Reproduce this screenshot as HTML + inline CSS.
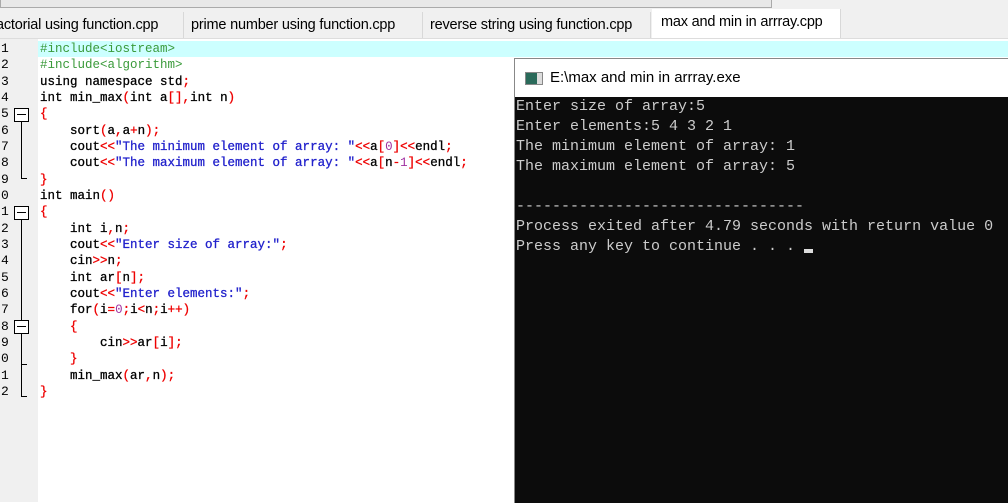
<!DOCTYPE html>
<html><head><style>
body{margin:0;width:1008px;height:502px;overflow:hidden;background:#fff;position:relative;font-family:"Liberation Sans",sans-serif}
.top{position:absolute;left:0;top:0;width:1008px;height:10px;background:#f0f0f0}
.top .b{position:absolute;left:0;top:0;width:770px;height:7px;border:1px solid #aaa;border-top:none;background:#e8e8e8}
.tabbar{position:absolute;left:0;top:10px;width:1008px;height:28px;background:#f0f0f0;border-bottom:1px solid #ddd}
.tab{position:absolute;top:2px;height:26px;background:#f0f0f0;border-right:1px solid #d8d8d8;font-size:14.5px;line-height:26px;color:#000;white-space:nowrap;overflow:hidden;letter-spacing:-0.2px}
.tab.act{background:#fff;top:-1px;height:29px;line-height:26px}
.gut{position:absolute;left:0;top:39px;width:38px;height:463px;background:#f0f0f0}
.hl{position:absolute;left:38px;top:41px;width:970px;height:16px;background:#ccffff}
.code{position:absolute;left:0;top:41px;font-family:"Liberation Mono",monospace;font-size:12.5px;line-height:16.33px;color:#000;white-space:pre;-webkit-text-stroke:0.3px #000}
.ln{position:absolute;left:1px;top:41px;font-family:"Liberation Mono",monospace;font-size:13px;line-height:16.33px;white-space:pre;color:#000}
.g{color:#3a9a3a;-webkit-text-stroke:0}.r{color:#e00;-webkit-text-stroke:0.3px #e00}.s{color:#22c;-webkit-text-stroke:0.3px #22c}.n{color:#a030a0;-webkit-text-stroke:0}
.fold{position:absolute;width:13px;height:12px;border:1px solid #000;background:#fff;left:14px}
.fold:after{content:"";position:absolute;left:2px;top:5px;width:9px;height:1px;background:#000}
.vl{position:absolute;left:21px;width:1px;background:#000}
.hz{position:absolute;left:21px;width:6px;height:1px;background:#000}
.con{position:absolute;left:514px;top:58px;width:494px;height:444px;border-left:1px solid #888;border-top:1px solid #888;background:#fff}
.title{position:absolute;left:0;top:0;width:494px;height:38px;font-size:15px;line-height:38px}
.ico{position:absolute;left:10px;top:13px;width:16px;height:11px;border:1px solid #888;background:linear-gradient(90deg,#2a6a5a 0 70%,#ddd 70%)}
.term{position:absolute;left:0;top:38px;width:494px;height:406px;background:#0c0c0c;color:#cccccc;font-family:"Liberation Mono",monospace;font-size:15px;line-height:20px;white-space:pre;padding-left:1px;padding-top:0}
.cur{display:inline-block;width:9px;height:4px;background:#ddd;vertical-align:-3px}
</style></head><body>
<div class="top"><div class="b"></div></div>
<div class="tabbar">
<div class="tab" style="left:0;width:183px;text-indent:-4px">actorial using function.cpp</div>
<div class="tab" style="left:184px;width:239px;padding-left:7px;box-sizing:border-box">prime number using function.cpp</div>
<div class="tab" style="left:424px;width:227px;padding-left:6px;box-sizing:border-box">reverse string using function.cpp</div>
<div class="tab act" style="left:652px;width:189px;padding-left:9px;box-sizing:border-box">max and min in arrray.cpp</div>
</div>
<div class="gut"></div>
<div class="hl"></div>
<div class="ln">1
2
3
4
5
6
7
8
9
0
1
2
3
4
5
6
7
8
9
0
1
2</div>
<div class="fold" style="top:108px"></div>
<div class="vl" style="top:121px;height:57px"></div><div class="hz" style="top:178px"></div>
<div class="fold" style="top:206px"></div>
<div class="vl" style="top:219px;height:177px"></div><div class="hz" style="top:396px"></div>
<div class="fold" style="top:320px"></div>
<div class="hz" style="top:364px"></div>
<div class="code" style="left:40px"><span class="g">#include&lt;iostream&gt;</span>
<span class="g">#include&lt;algorithm&gt;</span>
using namespace std<span class="r">;</span>
int min_max<span class="r">(</span>int a<span class="r">[],</span>int n<span class="r">)</span>
<span class="r">{</span>
    sort<span class="r">(</span>a<span class="r">,</span>a<span class="r">+</span>n<span class="r">);</span>
    cout<span class="r">&lt;&lt;</span><span class="s">"The minimum element of array: "</span><span class="r">&lt;&lt;</span>a<span class="r">[</span><span class="n">0</span><span class="r">]&lt;&lt;</span>endl<span class="r">;</span>
    cout<span class="r">&lt;&lt;</span><span class="s">"The maximum element of array: "</span><span class="r">&lt;&lt;</span>a<span class="r">[</span>n<span class="r">-</span><span class="n">1</span><span class="r">]&lt;&lt;</span>endl<span class="r">;</span>
<span class="r">}</span>
int main<span class="r">()</span>
<span class="r">{</span>
    int i<span class="r">,</span>n<span class="r">;</span>
    cout<span class="r">&lt;&lt;</span><span class="s">"Enter size of array:"</span><span class="r">;</span>
    cin<span class="r">&gt;&gt;</span>n<span class="r">;</span>
    int ar<span class="r">[</span>n<span class="r">];</span>
    cout<span class="r">&lt;&lt;</span><span class="s">"Enter elements:"</span><span class="r">;</span>
    for<span class="r">(</span>i<span class="r">=</span><span class="n">0</span><span class="r">;</span>i<span class="r">&lt;</span>n<span class="r">;</span>i<span class="r">++)</span>
    <span class="r">{</span>
        cin<span class="r">&gt;&gt;</span>ar<span class="r">[</span>i<span class="r">];</span>
    <span class="r">}</span>
    min_max<span class="r">(</span>ar<span class="r">,</span>n<span class="r">);</span>
<span class="r">}</span></div>
<div class="con">
<div class="title"><div class="ico"></div><span style="position:absolute;left:35px">E:\max and min in arrray.exe</span></div>
<div class="term">Enter size of array:5
Enter elements:5 4 3 2 1
The minimum element of array: 1
The maximum element of array: 5

--------------------------------
Process exited after 4.79 seconds with return value 0
Press any key to continue . . . <span class="cur"></span></div>
</div>
</body></html>
